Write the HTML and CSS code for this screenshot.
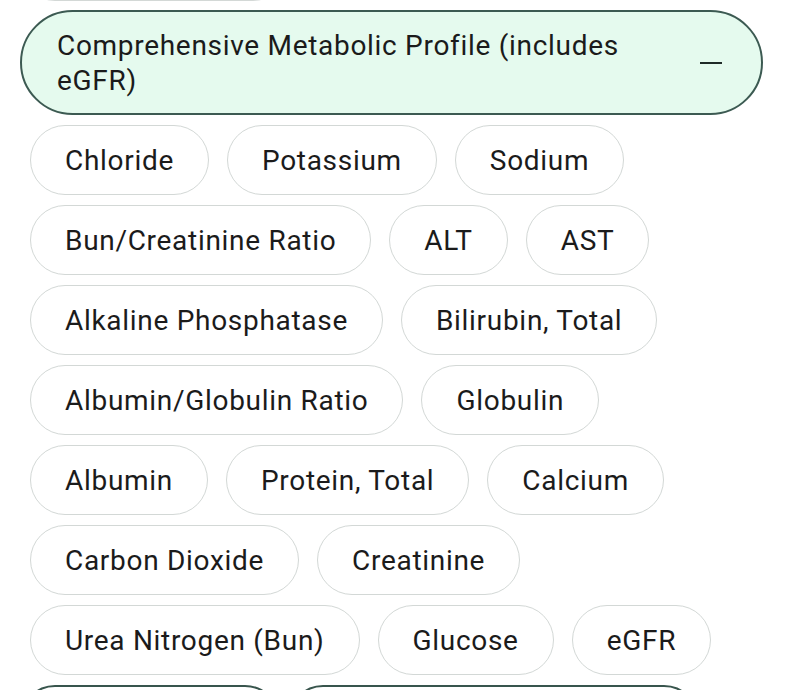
FILE: index.html
```html
<!DOCTYPE html>
<html>
<head>
<meta charset="utf-8">
<link rel="stylesheet" href="styles.css">
</head>
<body>
<div class="panels">
  <div class="pill pill-prev"></div>
  <section class="group">
    <div class="group-head">
      <span class="group-title">Comprehensive Metabolic Profile (includes eGFR)</span>
      <span class="collapse-icon"></span>
    </div>
    <div class="chips">
      <span class="chip">Chloride</span>
      <span class="chip">Potassium</span>
      <span class="chip">Sodium</span>
      <span class="chip">Bun/Creatinine Ratio</span>
      <span class="chip">ALT</span>
      <span class="chip">AST</span>
      <span class="chip">Alkaline Phosphatase</span>
      <span class="chip">Bilirubin, Total</span>
      <span class="chip">Albumin/Globulin Ratio</span>
      <span class="chip">Globulin</span>
      <span class="chip">Albumin</span>
      <span class="chip">Protein, Total</span>
      <span class="chip">Calcium</span>
      <span class="chip">Carbon Dioxide</span>
      <span class="chip">Creatinine</span>
      <span class="chip">Urea Nitrogen (Bun)</span>
      <span class="chip">Glucose</span>
      <span class="chip">eGFR</span>
    </div>
  </section>
  <div class="pill pill-dark pill-a"></div>
  <div class="pill pill-dark pill-b"></div>
</div>
</body>
</html>
```
FILE: styles.css
```css
html, body {
  margin: 0;
  padding: 0;
  background: #ffffff;
}
body {
  font-family: Roboto, "Liberation Sans", sans-serif;
  color: #1b1b1b;
  overflow: hidden;
}
.panels {
  display: flex;
  flex-wrap: wrap;
  row-gap: 10px;
  column-gap: 8px;
  margin-top: -70px;
  padding-left: 20px;
  width: 743px;
}
.pill {
  height: 70px;
  box-sizing: border-box;
  border-radius: 35px;
  background: #ffffff;
}
.pill-prev {
  width: 268px;
  height: 71px;
  margin-bottom: -1px;
  border: 1.5px solid #d3d8d6;
}
.pill-dark {
  border: 2px solid #38554d;
}
.pill-a { width: 260px; }
.pill-b { width: 411px; }
.group {
  width: 743px;
}
.group-head {
  display: flex;
  align-items: center;
  box-sizing: border-box;
  width: 743px;
  min-height: 105px;
  padding: 16px 39px 15px 35px;
  border: 2px solid #3c5a52;
  border-radius: 53px;
  background: #e5faee;
}
.group-title {
  flex: 1;
  font-size: 28px;
  line-height: 35px;
  letter-spacing: 0.7px;
}
.collapse-icon {
  width: 22px;
  height: 2px;
  margin-left: 20px;
  background: #1f2a27;
}
.chips {
  display: flex;
  flex-wrap: wrap;
  row-gap: 10px;
  column-gap: 18px;
  margin-top: 10px;
  padding-left: 10px;
}
.chip {
  display: inline-flex;
  align-items: center;
  height: 70px;
  box-sizing: border-box;
  padding: 0 34px;
  border: 1.5px solid #d3d8d6;
  border-radius: 35px;
  font-size: 28px;
  line-height: 33px;
  letter-spacing: 0.7px;
  white-space: nowrap;
}
```
